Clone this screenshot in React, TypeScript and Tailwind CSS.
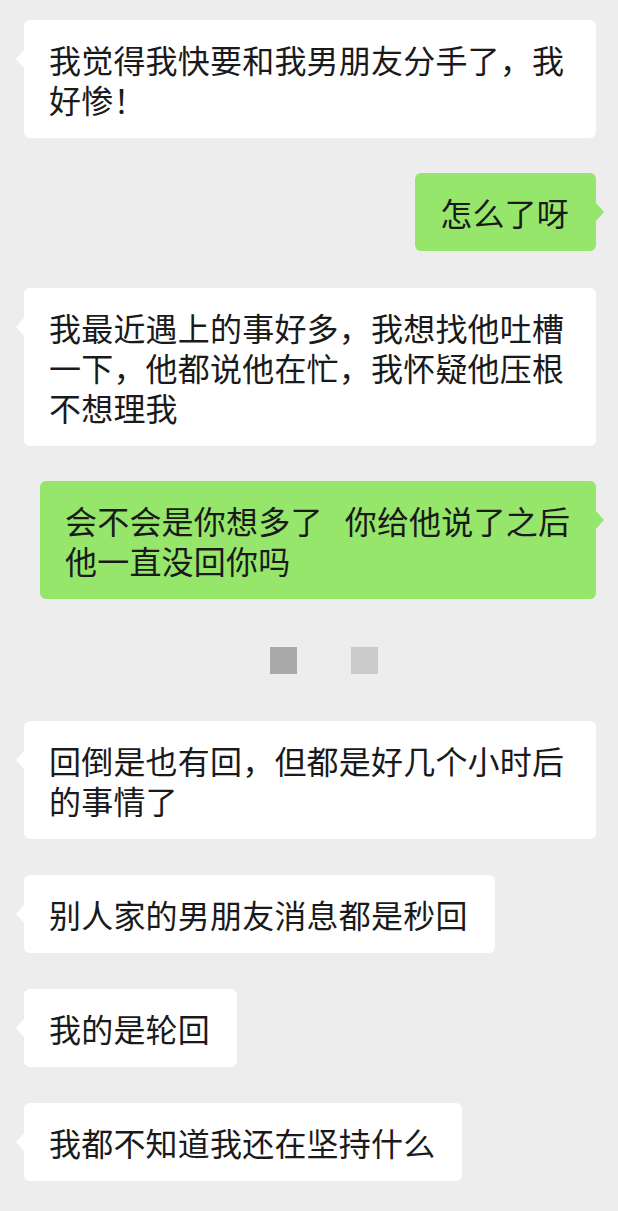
import React from "react";

type Msg = {
    side: "left" | "right";
    lines: string[];
    width?: string;
    mt: string;
};

const messages: Msg[] = [
    { side: "left", lines: ["我觉得我快要和我男朋友分手了，我", "好惨！"], width: "w-[572px]", mt: "mt-[20px]" },
    { side: "right", lines: ["怎么了呀"], mt: "mt-[35px]" },
    { side: "left", lines: ["我最近遇上的事好多，我想找他吐槽", "一下，他都说他在忙，我怀疑他压根", "不想理我"], width: "w-[572px]", mt: "mt-[37px]" },
    { side: "right", lines: ["会不会是你想多了   你给他说了之后", "他一直没回你吗"], width: "w-[556px]", mt: "mt-[35px]" },
];

const messagesAfter: Msg[] = [
    { side: "left", lines: ["回倒是也有回，但都是好几个小时后", "的事情了"], width: "w-[572px]", mt: "mt-[47px]" },
    { side: "left", lines: ["别人家的男朋友消息都是秒回"], mt: "mt-[36px]" },
    { side: "left", lines: ["我的是轮回"], mt: "mt-[36px]" },
    { side: "left", lines: ["我都不知道我还在坚持什么"], mt: "mt-[36px]" },
];

const Bubble: React.FC<{ msg: Msg }> = ({ msg }) => {
    const isLeft = msg.side === "left";
    return (
        <div className={`flex ${isLeft ? "justify-start pl-[24px]" : "justify-end pr-[22px]"} ${msg.mt}`}>
            <div
                className={`relative rounded-[6px] py-[19px] pl-[25px] pr-[27px] text-[32px] leading-[40px] tracking-[0.2px] text-[#1a1a1a] whitespace-pre ${
                    isLeft ? "bg-white" : "bg-[#95e66b]"
                } ${msg.width ?? ""}`}
            >
                {/* tail */}
                {isLeft ? (
                    <span className="absolute left-[-8px] top-[30px] w-0 h-0 border-y-[9px] border-y-transparent border-r-[8px] border-r-white" />
                ) : (
                    <span className="absolute right-[-8px] top-[30px] w-0 h-0 border-y-[9px] border-y-transparent border-l-[8px] border-l-[#95e66b]" />
                )}
                {msg.lines.map((line, i) => (
                    <div key={i}>{line}</div>
                ))}
            </div>
        </div>
    );
};

export default function App() {
    return (
        <div
            className="w-[618px] h-[1211px] bg-[#ededed] flex flex-col overflow-hidden"
            style={{ fontFamily: '"Noto Sans CJK SC", "Noto Sans", sans-serif' }}
        >
            {messages.map((m, i) => (
                <Bubble key={i} msg={m} />
            ))}

            {/* blurred placeholder */}
            <div className="flex gap-[54px] pl-[270px] mt-[48px]">
                <div className="w-[27px] h-[27px] bg-[#a9a9a9]" />
                <div className="w-[27px] h-[27px] bg-[#cbcbcb]" />
            </div>

            {messagesAfter.map((m, i) => (
                <Bubble key={i} msg={m} />
            ))}
        </div>
    );
}
